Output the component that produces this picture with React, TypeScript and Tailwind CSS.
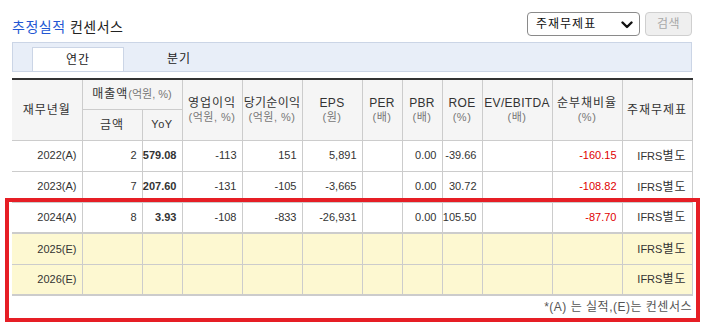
import React from "react";

const F = { fontFamily: '"Liberation Sans", "Noto Sans CJK KR", sans-serif' };

type Row = {
  y: string;
  amt: string;
  yoy: string;
  op: string;
  net: string;
  eps: string;
  per: string;
  pbr: string;
  roe: string;
  ev: string;
  debt: string;
  est?: boolean;
};

const rows: Row[] = [
  { y: "2022(A)", amt: "2", yoy: "579.08", op: "-113", net: "151", eps: "5,891", per: "", pbr: "0.00", roe: "-39.66", ev: "", debt: "-160.15" },
  { y: "2023(A)", amt: "7", yoy: "207.60", op: "-131", net: "-105", eps: "-3,665", per: "", pbr: "0.00", roe: "30.72", ev: "", debt: "-108.82" },
  { y: "2024(A)", amt: "8", yoy: "3.93", op: "-108", net: "-833", eps: "-26,931", per: "", pbr: "0.00", roe: "105.50", ev: "", debt: "-87.70" },
  { y: "2025(E)", amt: "", yoy: "", op: "", net: "", eps: "", per: "", pbr: "", roe: "", ev: "", debt: "", est: true },
  { y: "2026(E)", amt: "", yoy: "", op: "", net: "", eps: "", per: "", pbr: "", roe: "", ev: "", debt: "", est: true },
];

function H2({ a, b, wide }: { a: string; b: string; wide?: boolean }) {
  return (
    <div className="flex flex-col items-center leading-[14px] whitespace-nowrap">
      <span className={"text-[12px] text-[#333] " + (wide ? "tracking-[1px]" : "tracking-[0.3px]")}>{a}</span>
      <span className="text-[11px] text-[#777] tracking-[0.5px]">{b}</span>
    </div>
  );
}

export default function App() {
  const th = "border-r border-b border-[#cccccc] font-normal bg-[#f5f5f5] p-0 text-center align-middle whitespace-nowrap";
  const td = "border-r border-[#cccccc] p-0 pr-[5px] text-right text-[11px] text-[#333] whitespace-nowrap";
  return (
    <div className="relative w-[706px] h-[323px] bg-white overflow-hidden" style={F}>
      <div className="pl-[12px] pr-[14px]">
        <div className="flex justify-between items-center pt-[12px] h-[36px]">
          <div className="text-[14px] pt-[6px] leading-[18px] tracking-[0.5px]">
            <span className="text-[#2357d3]">추정실적</span>{" "}
            <span className="text-[#222]">컨센서스</span>
          </div>
          <div className="flex gap-[5px]">
            <div className="relative w-[113px] h-[24px] border border-[#8a8a8a] rounded-[4px] bg-white flex items-center pl-[8px] text-[12px] text-[#111] tracking-[1px]">
              주재무제표
              <svg className="absolute right-[6px] top-[8px]" width="12" height="8" viewBox="0 0 12 8">
                <path d="M1.5 1.5 L6 6 L10.5 1.5" fill="none" stroke="#111" strokeWidth="2.4" strokeLinecap="round" strokeLinejoin="round" />
              </svg>
            </div>
            <div className="w-[47px] h-[24px] border border-[#cfcfcf] rounded-[4px] bg-[#efefef] flex items-center justify-center text-[12px] text-[#a8a8a8] tracking-[0.5px]">
              검색
            </div>
          </div>
        </div>

        <div className="mt-[6px] h-[30px] border border-[#cbd5e6] bg-[#e8eef8] flex items-end pl-[19px]">
          <div className="w-[92px] h-[24px] bg-white border-t border-x border-[#cbd5e6] flex items-center justify-center text-[12px] text-[#222] tracking-[1px]">
            연간
          </div>
          <div className="w-[110px] h-[24px] flex items-center justify-center text-[12px] text-[#222] tracking-[1px]">
            분기
          </div>
        </div>

        <table className="mt-[6px] w-[680px] table-fixed border-collapse">
          <colgroup>
            <col className="w-[70px]" />
            <col className="w-[60px]" />
            <col className="w-[40px]" />
            <col className="w-[60px]" />
            <col className="w-[60px]" />
            <col className="w-[60px]" />
            <col className="w-[40px]" />
            <col className="w-[40px]" />
            <col className="w-[40px]" />
            <col className="w-[70px]" />
            <col className="w-[70px]" />
            <col className="w-[70px]" />
          </colgroup>
          <thead>
            <tr className="h-[30px] border-t-2 border-[#333]">
              <th rowSpan={2} className={th + " text-[12px] text-[#333] tracking-[1px]"}>재무년월</th>
              <th colSpan={2} className={th + " text-[12px] text-[#333] tracking-[1px]"}>
                매출액<span className="text-[11px] text-[#777] tracking-normal">(억원, %)</span>
              </th>
              <th rowSpan={2} className={th}><H2 a="영업이익" b="(억원, %)" wide /></th>
              <th rowSpan={2} className={th}><H2 a="당기순이익" b="(억원, %)" /></th>
              <th rowSpan={2} className={th}><H2 a="EPS" b="(원)" /></th>
              <th rowSpan={2} className={th}><H2 a="PER" b="(배)" /></th>
              <th rowSpan={2} className={th}><H2 a="PBR" b="(배)" /></th>
              <th rowSpan={2} className={th}><H2 a="ROE" b="(%)" /></th>
              <th rowSpan={2} className={th}><H2 a="EV/EBITDA" b="(배)" /></th>
              <th rowSpan={2} className={th}><H2 a="순부채비율" b="(%)" wide /></th>
              <th rowSpan={2} className={th + " text-[12px] text-[#333] tracking-[1px]"}>주재무제표</th>
            </tr>
            <tr className="h-[31px]">
              <th className={th + " text-[12px] text-[#333] tracking-[1px]"}>금액</th>
              <th className={th + " text-[11px] text-[#333] tracking-[0.5px]"}>YoY</th>
            </tr>
          </thead>
          <tbody>
            {rows.map((r, i) => (
              <tr
                key={r.y}
                className={
                  (i === 2 || i === 4 ? "h-[31px] border-b-2 " : "h-[31px] border-b ") +
                  "border-[#cccccc] " +
                  (r.est ? "bg-[#fdf8d1]" : "bg-white")
                }
              >
                <td className={td + " text-center pr-0"}>{r.y}</td>
                <td className={td}>{r.amt}</td>
                <td className={td + " font-bold"}>{r.yoy}</td>
                <td className={td}>{r.op}</td>
                <td className={td}>{r.net}</td>
                <td className={td}>{r.eps}</td>
                <td className={td}>{r.per}</td>
                <td className={td}>{r.pbr}</td>
                <td className={td}>{r.roe}</td>
                <td className={td}>{r.ev}</td>
                <td className={td + " text-[#e00000]"}>{r.debt}</td>
                <td className={td + " text-center pr-0"}>
                  IFRS<span className="text-[12px] tracking-[1px]">별도</span>
                </td>
              </tr>
            ))}
          </tbody>
        </table>
        <div className="text-right text-[12px] text-[#555] mt-[4px] leading-[14px] tracking-[0.5px]">*(A) 는 실적,(E)는 컨센서스</div>
      </div>

      <div className="absolute left-[5px] top-[198px] w-[695px] h-[124px] border-[4px] border-[#e61e25]" />
    </div>
  );
}
